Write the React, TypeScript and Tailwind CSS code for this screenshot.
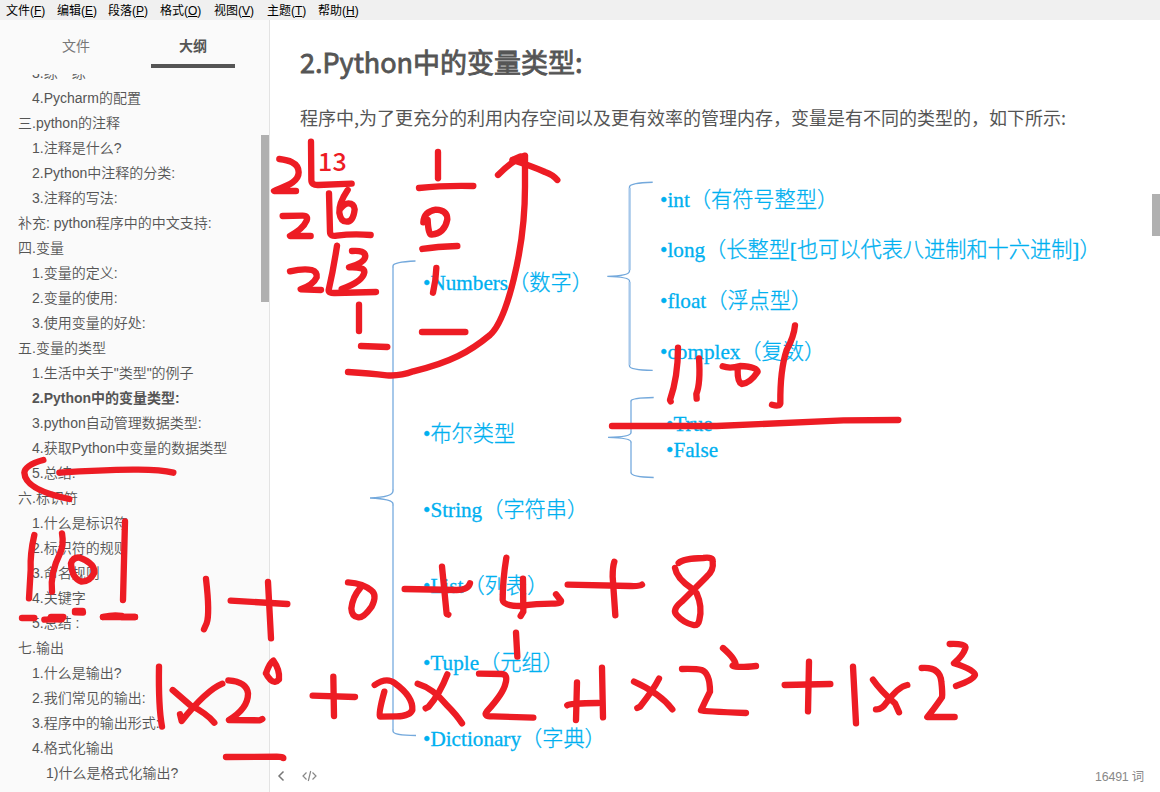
import React from "react";

const menus = [
  { label: "文件", key: "F", width: "w-[51px]" },
  { label: "编辑", key: "E", width: "w-[51px]" },
  { label: "段落", key: "P", width: "w-[52px]" },
  { label: "格式", key: "O", width: "w-[54px]" },
  { label: "视图", key: "V", width: "w-[53px]" },
  { label: "主题", key: "T", width: "w-[51px]" },
  { label: "帮助", key: "H", width: "w-[51px]" },
];

const indent = ["pl-[18px]", "pl-[32px]", "pl-[46px]"];

const outline: { text: string; level: number; active?: boolean }[] = [
  { text: "3.练一练", level: 1 },
  { text: "4.Pycharm的配置", level: 1 },
  { text: "三.python的注释", level: 0 },
  { text: "1.注释是什么?", level: 1 },
  { text: "2.Python中注释的分类:", level: 1 },
  { text: "3.注释的写法:", level: 1 },
  { text: "补充: python程序中的中文支持:", level: 0 },
  { text: "四.变量", level: 0 },
  { text: "1.变量的定义:", level: 1 },
  { text: "2.变量的使用:", level: 1 },
  { text: "3.使用变量的好处:", level: 1 },
  { text: "五.变量的类型", level: 0 },
  { text: '1.生活中关于"类型"的例子', level: 1 },
  { text: "2.Python中的变量类型:", level: 1, active: true },
  { text: "3.python自动管理数据类型:", level: 1 },
  { text: "4.获取Python中变量的数据类型", level: 1 },
  { text: "5.总结:", level: 1 },
  { text: "六.标识符", level: 0 },
  { text: "1.什么是标识符", level: 1 },
  { text: "2.标识符的规则", level: 1 },
  { text: "3.命名规则", level: 1 },
  { text: "4.关键字", level: 1 },
  { text: "5.总结 :", level: 1 },
  { text: "七.输出", level: 0 },
  { text: "1.什么是输出?", level: 1 },
  { text: "2.我们常见的输出:", level: 1 },
  { text: "3.程序中的输出形式:", level: 1 },
  { text: "4.格式化输出", level: 1 },
  { text: "1)什么是格式化输出?", level: 2 },
];

// Nodes of the type diagram, placed relative to the figure's corner.
const nodes = [
  { text: "•Numbers（数字）", pos: "left-[123px] top-[128px]" },
  { text: "•布尔类型", pos: "left-[123px] top-[279px]" },
  { text: "•String（字符串）", pos: "left-[123px] top-[355px]" },
  { text: "•List（列表）", pos: "left-[123px] top-[431px]" },
  { text: "•Tuple（元组）", pos: "left-[123px] top-[508px]" },
  { text: "•Dictionary（字典）", pos: "left-[123px] top-[584px]" },
  { text: "•int（有符号整型）", pos: "left-[360px] top-[45px]" },
  { text: "•long（长整型[也可以代表八进制和十六进制]）", pos: "left-[360px] top-[95px]" },
  { text: "•float（浮点型）", pos: "left-[360px] top-[146px]" },
  { text: "•complex（复数）", pos: "left-[360px] top-[197px]" },
  { text: "•True", pos: "left-[366px] top-[269px]" },
  { text: "•False", pos: "left-[366px] top-[295px]" },
];

// Pen strokes, grouped by the area of the board they were drawn on (three units per pixel).
const ink = [
  {
    origin: "translate(270 140) scale(0.33333)",
    strokes: [
      "M28 57 C50 60 86 65 86 97 C86 130 40 140 12 153 L78 153",
      "M123 5 L124 120 Q124 136 145 135 L245 131",
      "M177 160 L180 275 Q180 290 200 287 Q250 280 302 285",
      "M233 150 Q206 190 208 218 Q212 245 230 245 Q250 245 254 208 Q252 190 235 190 Q225 190 212 205",
      "M38 228 L98 227 Q118 227 108 245 Q100 265 60 288 L122 288",
      "M201 317 Q190 390 176 450 Q175 460 195 459 L318 456",
      "M246 333 Q285 330 286 348 Q286 368 237 382 Q285 380 283 397 Q278 425 215 447",
      "M60 394 Q100 385 125 390 Q142 395 140 412 Q130 435 92 448 L153 450",
      "M267 494 L267 573",
      "M273 618 L352 621",
      "M504 36 L504 115",
      "M447 144 Q520 136 610 138",
      "M460 247 Q462 215 497 209 Q532 210 532 238 Q524 280 485 284 Q475 285 473 240",
      "M457 327 Q500 320 562 318",
      "M499 384 Q498 420 489 458",
      "M456 576 L586 576",
      "M234 696 Q300 700 350 706 Q390 709 430 694 C540 668 600 635 660 585 C710 540 765 330 765 140 L765 50",
      "M684 105 Q735 55 765 47",
      "M728 60 L750 50",
      "M728 60 Q790 80 825 96 Q850 105 862 120",
    ],
  },
  {
    origin: "translate(0 260) scale(0.33333)",
    strokes: [
      "M130 600 Q75 615 73 638 Q75 690 208 717",
      "M178 638 Q300 630 400 629 Q480 628 520 638",
    ],
  },
  {
    origin: "translate(0 520) scale(0.33333)",
    strokes: [
      "M103 45 Q90 100 92 150 L87 235",
      "M186 40 Q192 75 180 100 Q150 160 156 215",
      "M213 130 Q220 110 240 113 Q285 130 283 158 Q270 185 245 185 Q215 175 213 130",
      "M375 4 L369 240",
      "M66 294 L103 294",
      "M133 299 L185 298",
      "M153 291 L190 291",
      "M225 273 L248 273",
      "M225 277 L249 278",
      "M309 291 Q340 284 365 288 L365 291 L405 291",
      "M309 291 L405 291",
      "M618 177 Q630 280 620 310 L612 328",
      "M692 242 L862 252",
      "M804 186 L813 355",
      "M477 440 Q475 560 486 620",
      "M518 510 L570 555 Q620 580 643 608",
      "M667 491 Q620 510 545 603 L540 583",
      "M685 481 Q740 485 744 520 Q745 565 687 600 L780 601 L787 597",
      "M798 460 Q808 430 820 422 Q840 450 837 478 Q825 492 812 480 Q802 470 798 460",
      "M678 711 L830 710 Q850 711 850 714",
    ],
  },
  {
    origin: "translate(280 540) scale(0.33333)",
    strokes: [
      "M160 410 L162 528",
      "M98 467 L225 471",
      "M204 127 Q250 130 275 152 Q292 165 275 200 Q250 235 235 232 Q215 230 214 205 Q218 170 240 145",
      "M486 80 Q495 170 500 222 L505 224",
      "M374 147 L530 150 Q565 150 570 130",
      "M679 53 Q668 120 668 180 Q670 198 720 198 Q780 190 825 191 Q845 190 843 182 L828 163",
      "M729 116 L730 215 L722 228",
      "M1003 65 Q998 80 998 110 L1006 226",
      "M863 134 L1050 138 Q1080 139 1086 134",
      "M708 278 L712 350",
      "M284 435 Q320 410 345 430 Q400 470 397 510 Q390 528 350 529 L300 530 Q295 520 313 455",
      "M413 431 Q460 445 500 495 Q530 525 546 550",
      "M502 403 Q480 460 446 500 L437 505",
      "M597 401 L665 402 Q685 403 676 432 Q670 460 620 515 Q608 530 640 529 L760 533",
      "M862 496 Q870 490 955 489",
      "M891 427 L888 540",
      "M966 383 L969 532",
    ],
  },
  {
    origin: "translate(620 540) scale(0.33333)",
    strokes: [
      "M176 69 Q190 55 250 54 Q280 50 278 65 Q282 90 260 110 L185 185 Q155 210 170 225 Q190 248 220 255 Q235 258 238 240 Q248 200 230 160 L215 145 Q170 115 165 84",
      "M42 425 Q120 460 157 508",
      "M117 416 Q100 450 60 500 L52 504",
      "M186 387 Q230 386 245 390 Q270 400 270 455 Q255 485 243 511 Q250 514 378 519",
      "M309 324 Q350 360 347 378",
      "M338 377 Q350 384 408 378",
      "M494 435 L631 432",
      "M567 365 L564 514",
      "M699 380 L708 550",
      "M759 419 Q780 450 825 490 L837 517",
      "M862 435 Q835 440 800 487 Q785 510 768 508",
      "M905 384 Q960 380 964 425 Q968 460 966 472 Q940 510 922 531 L1004 531",
      "M989 312 Q1040 310 1036 325 Q1030 345 1002 370 Q1065 390 1065 405 Q1060 420 1008 438",
    ],
  },
  {
    origin: "translate(600 170) scale(0.33333)",
    strokes: [
      "M234 533 Q234 620 210 690 L212 694",
      "M297 565 Q302 640 289 672 L290 686",
      "M368 589 Q390 597 420 588 Q470 590 473 605 Q450 640 425 642 Q412 636 413 600",
      "M585 466 Q582 500 560 540 Q540 600 541 700 Q538 711 516 704",
      "M36 768 L350 768 Q600 757 730 751 L895 750",
    ],
  },
];

function MenuBar() {
  return (
    <nav className="flex h-5 shrink-0 items-center bg-[#f0f0f0] pl-1.5 text-xs leading-5 text-black">
      {menus.map((m) => (
        <span key={m.key} className={`${m.width} whitespace-nowrap pt-0.5`}>
          {m.label}(<u className="underline-offset-1">{m.key}</u>)
        </span>
      ))}
    </nav>
  );
}

function Sidebar() {
  return (
    <aside className="relative flex w-[270px] shrink-0 flex-col border-r border-[#e3e3e3] bg-[#fafafa] text-sm text-[#555]">
      <div className="flex h-12 shrink-0 pl-[34px]">
        <div className="mr-[33px] flex w-[84px] items-center justify-center pt-1 text-[#777]">文件</div>
        <div className="flex w-[84px] items-center justify-center border-b-4 border-[#555] pt-2 font-bold">大纲</div>
      </div>
      <div className="mt-1.5 min-h-0 flex-1 overflow-hidden">
        <ul className="-mt-[13px]">
          {outline.map((o, i) => (
            <li
              key={i}
              className={`h-[25px] whitespace-nowrap leading-[25px] ${indent[o.level]} ${o.active ? "font-bold" : "font-[350]"}`}
            >
              {o.text}
            </li>
          ))}
        </ul>
      </div>
      <div className="absolute top-[115px] right-0 h-[167px] w-2 bg-[#b0b0b0]" />
    </aside>
  );
}

function TypeDiagram() {
  return (
    <figure className="relative min-h-0 flex-1">
      <svg className="absolute inset-0 h-full w-full overflow-visible" fill="none">
        <g transform="translate(-300 -140)" stroke="#74a9dc" strokeWidth="1.4">
          <path d="M415.5 261 Q393 262 393 266 V491 Q393 497 370 498 Q393 499 393 504 V731 Q393 735.5 416 735.5" />
          <path d="M652.7 182.3 Q629.5 183 629.5 187 V271 Q629.5 276 607.3 276.4 Q629.5 277 629.5 281 V366 Q629.5 370 652.7 370.4" />
          <path d="M653.7 397.5 Q631 398 631 401 V432.5 Q631 437 608 437.4 Q631 438 631 442 V472.5 Q631 477 653.7 477.5" />
          <path stroke="#a6c8ea" strokeWidth="2" d="M393 268 V489 M393 506 V729 M629.7 188 V270 M629.7 282 V365 M631 402 V431 M631 443 V472" />
        </g>
      </svg>
      {nodes.map((n) => (
        <span
          key={n.text}
          className={`absolute ${n.pos} whitespace-nowrap font-['Liberation_Serif','Noto_Sans_CJK_SC',serif] text-[21.2px] leading-[30px] font-light text-[#00b0f0] [-webkit-text-stroke:0.3px_#00b0f0]`}
        >
          {n.text}
        </span>
      ))}
    </figure>
  );
}

function Footer() {
  return (
    <footer className="flex h-8 shrink-0 items-center justify-between pr-4 pl-[7px] text-[12.4px] text-[#888]">
      <div className="flex items-center gap-4">
        <svg width="9" height="12" viewBox="0 0 9 12" fill="none" stroke="#777" strokeWidth="1.5">
          <path d="M6.5 1.5 L2 6 L6.5 10.5" />
        </svg>
        <svg width="15" height="12" viewBox="0 0 15 12" fill="none" stroke="#888" strokeWidth="1.2">
          <path d="M4.5 2.5 L1 6 L4.5 9.5 M10.5 2.5 L14 6 L10.5 9.5 M8.7 1 L6.3 11" />
        </svg>
      </div>
      <span className="pt-0.5 tracking-[-0.2px]">16491 词</span>
    </footer>
  );
}

function InkLayer() {
  return (
    <svg className="pointer-events-none absolute inset-0" width="1160" height="792" fill="none">
      {ink.map((g) => (
        <g key={g.origin} transform={g.origin} stroke="#ed1c24" strokeWidth="19" strokeLinecap="round" strokeLinejoin="round">
          {g.strokes.map((d) => (
            <path key={d} d={d} />
          ))}
        </g>
      ))}
    </svg>
  );
}

export default function App() {
  return (
    <div className="relative flex h-[792px] w-[1160px] flex-col overflow-hidden bg-white font-['Liberation_Sans','Noto_Sans_CJK_SC',sans-serif]">
      <MenuBar />
      <div className="flex min-h-0 flex-1">
        <Sidebar />
        <main className="relative flex min-w-0 flex-1 flex-col">
          <article className="flex min-h-0 flex-1 flex-col pl-[30px] text-[#555]">
            <h2 className="mt-5 h-11 font-['Noto_Sans_CJK_SC',sans-serif] text-[27px] leading-[44px] font-normal whitespace-nowrap [-webkit-text-stroke:0.8px_#555]">
              2.Python中的变量类型:
            </h2>
            <p className="mt-[19px] h-[37px] font-['Noto_Sans_CJK_SC',sans-serif] text-lg leading-7 whitespace-nowrap">
              程序中,为了更充分的利用内存空间以及更有效率的管理内存，变量是有不同的类型的，如下所示:
            </p>
            <TypeDiagram />
          </article>
          <Footer />
          <div className="absolute top-[174px] right-0 h-[42px] w-2 bg-[#b0b0b0]" />
        </main>
      </div>
      <InkLayer />
      <span className="absolute top-[145px] left-[318px] font-['Noto_Sans_CJK_SC',sans-serif] text-[25px] leading-[30px] font-medium tracking-[0.3px] text-[#ed1c24]">
        13
      </span>
    </div>
  );
}
